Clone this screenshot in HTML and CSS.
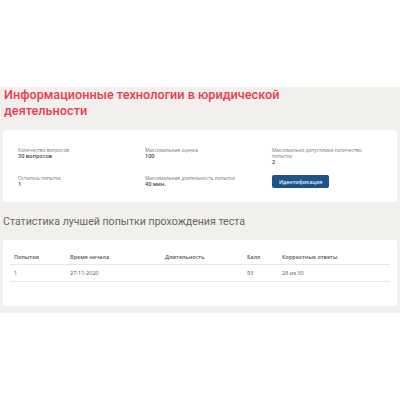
FILE: index.html
```html
<!DOCTYPE html>
<html lang="ru">
<head>
  <meta charset="UTF-8">
  <meta name="viewport" content="width=device-width, initial-scale=1.0">
  <title>Информационные технологии в юридической деятельности</title>
  <link rel="stylesheet" href="styles.css">
</head>
<body>
  <main class="band">
    <h1>Информационные технологии в юридической деятельности</h1>

    <section class="card info">
      <div class="item">
        <span class="label">Количество вопросов</span>
        <b>30 вопросов</b>
      </div>
      <div class="item">
        <span class="label">Максимальная оценка</span>
        <b>100</b>
      </div>
      <div class="item">
        <span class="label">Максимально допустимое количество попыток</span>
        <b>2</b>
      </div>
      <div class="item">
        <span class="label">Осталось попыток</span>
        <b>1</b>
      </div>
      <div class="item">
        <span class="label">Максимальная длительность попытки</span>
        <b>40 мин.</b>
      </div>
      <div class="item">
        <button type="button">Идентификация</button>
      </div>
    </section>

    <h2>Статистика лучшей попытки прохождения теста</h2>

    <section class="card stats">
      <table>
        <thead>
          <tr>
            <th class="c1">Попытки</th>
            <th class="c2">Время начала</th>
            <th class="c3">Длительность</th>
            <th class="c4">Балл</th>
            <th>Корректные ответы</th>
          </tr>
        </thead>
        <tbody>
          <tr>
            <td>1</td>
            <td>27-11-2020</td>
            <td></td>
            <td>93</td>
            <td>28 из 30</td>
          </tr>
        </tbody>
      </table>
    </section>
  </main>
</body>
</html>
```

FILE: styles.css
```css
body { margin: 0; background-color: #fff; font-family: "Open Sans", "Noto Sans", sans-serif; color: #444; }
.band { margin-top: 87px; padding: 0 3px 7px; background-color: #f1f0ed; }
h1 { margin: 0; padding: 0 1px; max-width: 300px; font-size: 12.7px; line-height: 16px; font-weight: 500; color: #ee3a52; font-family: Roboto, sans-serif; }
h2 { margin: 12px 0 10px; font-size: 10.6px; line-height: 16px; font-weight: 400; color: #666; font-family: Roboto, sans-serif; }
.card { background-color: #fff; border-radius: 2px; }
.info { margin-top: 11px; display: grid; grid-template-columns: 127px 127px 1fr; row-gap: 10px; padding: 17px 15px 15px; height: 40px; }
.item { font-size: 4.8px; line-height: 6px; }
.label { display: block; color: #777; }
.item b { display: block; font-size: 5.5px; line-height: 6px; font-weight: 600; color: #444; }
button { padding: 0 7px; height: 13px; background-color: #1d5488; color: #e8eef5; border: none; border-radius: 2px; font-family: inherit; font-size: 5.2px; font-weight: 600; }
.stats { padding: 9px 7px 24px; }
table { width: 100%; border-collapse: collapse; font-size: 5.5px; table-layout: fixed; }
th { text-align: left; font-weight: 600; color: #555; height: 15px; padding: 0 1px 0 4px; border-bottom: 1px solid #e8e8e8; }
td { height: 16px; padding: 0 1px 0 4px; color: #555; border-bottom: 1px solid #e8e8e8; }
.c1 { width: 51px; }
.c2 { width: 90px; }
.c3 { width: 77px; }
.c4 { width: 30px; }
```
